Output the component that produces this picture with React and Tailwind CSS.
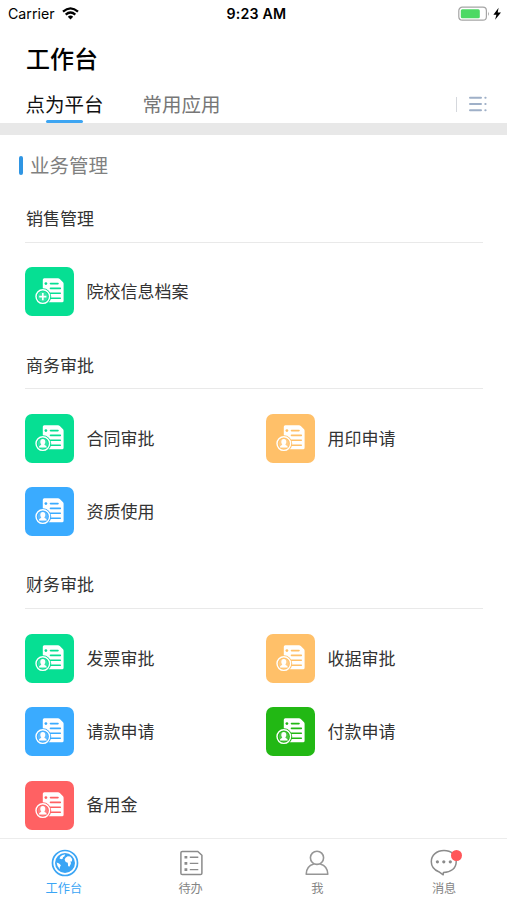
import { useState } from "react";

const groups = [
    {
        title: '销售管理',
        items: [{ name: '院校信息档案', color: 'mint', type: 'plus' }],
    },
    {
        title: '商务审批',
        items: [
            { name: '合同审批', color: 'mint', type: 'user' },
            { name: '用印申请', color: 'orange', type: 'user' },
            { name: '资质使用', color: 'blue', type: 'user' },
        ],
    },
    {
        title: '财务审批',
        items: [
            { name: '发票审批', color: 'mint', type: 'user' },
            { name: '收据审批', color: 'orange', type: 'user' },
            { name: '请款申请', color: 'blue', type: 'user' },
            { name: '付款申请', color: 'green', type: 'user' },
            { name: '备用金', color: 'red', type: 'user' },
        ],
    },
];

function getColorClass(color) {
    switch (color) {
        case 'mint': return 'bg-[#06df93] text-[#06df93]';
        case 'orange': return 'bg-[#ffc069] text-[#ffc069]';
        case 'blue': return 'bg-[#3aabff] text-[#3aabff]';
        case 'green': return 'bg-[#22b814] text-[#22b814]';
        case 'red': return 'bg-[#ff6163] text-[#ff6163]';
        default: return 'bg-gray-500 text-gray-500';
    }
}

// White document with a round badge; the cut-outs take the tile color
function DocIcon({ type }) {
    return (
        <svg className="w-full h-full" viewBox="0 0 49 49" fill="none">
            <path d="M19.3 11.2H33Q34 11.2 34.8 12L37.8 15Q38.6 15.8 38.6 16.8V33.7Q38.6 35.2 37.1 35.2H17.8V12.7Q17.8 11.2 19.3 11.2Z" fill="#fff" />
            <circle cx="20.9" cy="16.6" r="1.4" fill="currentColor" />
            <path d="M25.5 16.6H33M25.5 21.4H35.3M25.5 26.3H35.3M25.5 31.2H35.3" stroke="currentColor" strokeWidth="1.6" strokeLinecap="round" />
            <circle cx="17.8" cy="29.6" r="8.4" fill="currentColor" />
            <circle cx="17.8" cy="29.6" r="6.8" stroke="#fff" strokeWidth="1.4" />
            <circle cx="17.8" cy="29.6" r="5.1" fill="#fff" fillOpacity=".2" />
            {type === 'plus' ? (
                <path d="M17.8 26V33.2M14.2 29.6H21.4" stroke="#fff" strokeWidth="1.7" />
            ) : (
                <path d="M17.8 25C16.1 25 15.3 26.2 15.3 27.7C15.3 29 15.7 29.8 16.3 30.3C16.2 31.3 14 31.6 13.7 33.5H21.9C21.6 31.6 19.4 31.3 19.3 30.3C19.9 29.8 20.3 29 20.3 27.7C20.3 26.2 19.5 25 17.8 25Z" fill="#fff" />
            )}
        </svg>
    );
}

function StatusBar() {
    return (
        <div className="h-7 pl-2 pr-[5px] grid grid-cols-3 items-center text-black font-[Inter,sans-serif] shrink-0">
            <div className="flex items-center gap-[7px] text-[14.2px]">
                <span>Carrier</span>
                <svg width="17" height="13" viewBox="0 0 17 13" fill="none" stroke="#000" strokeWidth="2.3">
                    <path d="M1 4.6Q8.5 -1.8 16 4.6" />
                    <path d="M3.7 7.6Q8.5 3.4 13.3 7.6" />
                    <path d="M8.5 12.4L5.8 9.7Q8.5 7.5 11.2 9.7Z" fill="#000" stroke="none" />
                </svg>
            </div>
            <div className="text-center text-[14.2px] font-semibold tracking-[.2px] whitespace-nowrap pl-[3px]">9:23 AM</div>
            <div className="flex justify-end items-center">
                <svg width="44" height="16" viewBox="0 0 44 16" fill="none">
                    <rect x=".8" y="1.2" width="27.6" height="13" rx="3.5" stroke="#a5a5a5" strokeWidth="1.2" />
                    <rect x="2.8" y="3.2" width="19" height="9" rx="1.5" fill="#4cd964" />
                    <path d="M30 5.5Q31.8 7.7 30 9.9Z" fill="#a5a5a5" />
                    <path d="M40.6 1.8L35.4 8.8H38.4L37.1 13.8L43 6.6H39.7Z" fill="#000" />
                </svg>
            </div>
        </div>
    );
}

function TabIcon({ name }) {
    if (name === 'home') {
        return (
            <svg className="translate-x-px" width="28" height="28" viewBox="0 0 28 28" fill="none">
                <circle cx="14" cy="14" r="12.5" stroke="#3aa5f5" strokeWidth="1.7" />
                <circle cx="14" cy="14" r="10" fill="#3aa5f5" />
                <path d="M11 6.2L14.3 5.3L13.3 7.4L11.8 8.2L12.2 9.3L10.4 10.2L8.5 9.5L9.2 7.8Z" fill="#fff" />
                <path d="M14.5 8.8L16.7 7.3L19.2 7.6L21.2 10L20.9 12.8L19.6 11.9L19.9 14.8L18.3 17.7L17.1 17.1L16.8 13.8L14.7 12.9L13.6 10.8Z" fill="#fff" />
                <path d="M5.6 13.4L8.1 14.6L9.9 16.2L8.8 18.2L8.9 20.2Q6 17.7 5.6 13.4Z" fill="#fff" />
            </svg>
        );
    }
    if (name === 'todo') {
        return (
            <svg width="28" height="28" viewBox="0 0 28 28" fill="none" stroke="#8b8b8b" strokeWidth="1.5">
                <path d="M5.3 2.4H20.8L24.9 6.3V24.2Q24.9 25.6 23.5 25.6H5.3Q3.9 25.6 3.9 24.2V3.8Q3.9 2.4 5.3 2.4Z" />
                <path d="M12.8 8.2H21.3M12.8 14.4H21.3M12.8 20.6H21.3" strokeWidth="1.4" />
                <path d="M7.5 8.2H10.3M7.5 14.4H10.3M7.5 20.6H10.3" strokeWidth="2.6" />
            </svg>
        );
    }
    if (name === 'me') {
        return (
            <svg width="28" height="28" viewBox="0 0 28 28" fill="none" stroke="#969696" strokeWidth="1.6">
                <circle cx="14" cy="8.8" r="6.6" />
                <path d="M10.8 15C6.3 16.3 3.2 20 3.2 25.3H24.8C24.8 20 21.7 16.3 17.2 15" strokeLinejoin="round" />
            </svg>
        );
    }
    return (
        <svg width="28" height="28" viewBox="0 0 28 28" fill="none">
            <path d="M14 1.6C6.8 1.6 1.3 6.1 1.3 12.7C1.3 17.3 4.2 20.8 8.7 22.7L13.2 25.8L13.4 23.5C21 23.3 26.2 19.2 26.2 12.7C26.2 6.1 21.2 1.6 14 1.6Z" stroke="#8b8b8b" strokeWidth="1.5" strokeLinejoin="round" />
            <circle cx="7.4" cy="12.8" r="1.6" fill="#8b8b8b" />
            <circle cx="13.8" cy="12.8" r="1.6" fill="#8b8b8b" />
            <circle cx="20.3" cy="12.8" r="1.6" fill="#8b8b8b" />
        </svg>
    );
}

export default function App() {
    const [activeTab, setActiveTab] = useState('platform');
    const [page, setPage] = useState('home');

    const tabs = [
        { id: 'platform', label: '点为平台' },
        { id: 'common', label: '常用应用' },
    ];

    const pages = [
        { id: 'home', label: '工作台' },
        { id: 'todo', label: '待办' },
        { id: 'me', label: '我' },
        { id: 'message', label: '消息', badge: true },
    ];

    return (
        <div className="w-full h-[900px] flex flex-col bg-white overflow-hidden font-['Noto_Sans_CJK_SC',sans-serif]">
            <StatusBar />

            <header className="h-[95px] shrink-0">
                <h1 className="pl-[26px] h-[61px] text-2xl leading-[59px] font-medium text-black">工作台</h1>
                <div className="h-[34px] pl-[25.5px] pr-5 flex items-start justify-between">
                    <div className="flex gap-[39px]">
                        {tabs.map((tab) => (
                            <button
                                key={tab.id}
                                onClick={() => setActiveTab(tab.id)}
                                className={`h-[34px] flex flex-col items-center justify-between text-[19.5px] leading-[30px] ${activeTab === tab.id ? 'text-[#111]' : 'text-[#777]'}`}
                            >
                                {tab.label}
                                {activeTab === tab.id && <span className="w-[37px] h-[3.5px] rounded-full bg-[#3da5f2]" />}
                            </button>
                        ))}
                    </div>
                    <div className="flex items-center gap-[12px] mt-[7px]">
                        <span className="w-px h-[15px] bg-[#d5d8dd]" />
                        <svg width="18" height="16" viewBox="0 0 18 16" stroke="#9fb0c8" strokeWidth="2" strokeLinecap="round">
                            <path d="M1 1.8H12M1 8H12M1 14.2H12" />
                            <path d="M16.3 1.8H16.6M16.3 8H16.6M16.3 14.2H16.6" />
                        </svg>
                    </div>
                </div>
            </header>
            <div className="h-3 shrink-0 bg-[#e8e8e8]" />

            <main className="flex-1 min-h-0 overflow-hidden">
                <h2 className="h-[47px] pt-[13px] pl-[19px] flex items-start gap-[7px] text-[19.5px] leading-[34px] text-[#808080]">
                    <span className="w-1 h-[19px] mt-2 rounded-full bg-[#2f95e3]" />
                    业务管理
                </h2>
                {groups.map((group) => (
                    <section key={group.title} className="pl-[25px]">
                        <div className="h-[73.3px]">
                            <h3 className="h-[60.5px] mr-6 pl-px border-b border-[#e9e9e9] text-[17px] leading-[72px] text-[#333]">{group.title}</h3>
                        </div>
                        <div className="grid grid-cols-[241px_241px]">
                            {group.items.map((item) => (
                                <div key={item.name} className="h-[73.3px] flex items-center gap-3">
                                    <div className={`w-[49px] h-[49px] rounded-[7px] ${getColorClass(item.color)}`}>
                                        <DocIcon type={item.type} />
                                    </div>
                                    <span className="pb-[1.5px] pl-[.5px] text-[17px] leading-6 text-[#333]">{item.name}</span>
                                </div>
                            ))}
                        </div>
                    </section>
                ))}
            </main>

            <nav className="h-[62px] shrink-0 grid grid-cols-4 border-t border-[#ececec] bg-white">
                {pages.map((p) => (
                    <button
                        key={p.id}
                        onClick={() => setPage(p.id)}
                        className={`flex flex-col items-center pt-[10px] pl-px text-[12.2px] leading-[22px] ${page === p.id ? 'text-[#3aa5f5]' : 'text-[#858585]'}`}
                    >
                        <span className="relative">
                            <TabIcon name={p.id} />
                            {p.badge && <span className="absolute top-px -right-[4px] w-[11px] h-[11px] rounded-full bg-[#ff5659]" />}
                        </span>
                        {p.label}
                    </button>
                ))}
            </nav>
        </div>
    );
}
